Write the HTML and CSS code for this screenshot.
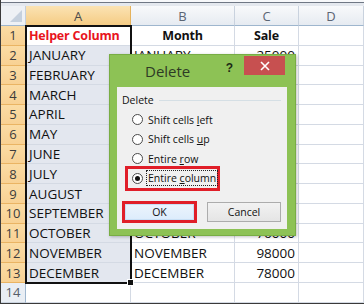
FILE: index.html
```html
<!DOCTYPE html>
<html lang="en">
<head>
  <meta charset="UTF-8">
  <title>Delete Column</title>
  <link rel="stylesheet" href="styles.css">
</head>
<body>
  <div class="screen">
    <div class="topbar"></div>
    <div class="sheet">
      <div class="corner"><span class="tri"></span></div>
      <div class="colhead active">A</div>
      <div class="colhead">B</div>
      <div class="colhead">C</div>
      <div class="colhead">D</div>

      <div class="rowhead active">1</div>
      <div class="cell sel first red bold">Helper Column</div>
      <div class="cell bold center">Month</div>
      <div class="cell bold center">Sale</div>
      <div class="cell"></div>

      <div class="rowhead active">2</div>
      <div class="cell sel">JANUARY</div>
      <div class="cell">JANUARY</div>
      <div class="cell num">25000</div>
      <div class="cell"></div>

      <div class="rowhead active">3</div>
      <div class="cell sel">FEBRUARY</div>
      <div class="cell">FEBRUARY</div>
      <div class="cell num">45000</div>
      <div class="cell"></div>

      <div class="rowhead active">4</div>
      <div class="cell sel">MARCH</div>
      <div class="cell">MARCH</div>
      <div class="cell num">36000</div>
      <div class="cell"></div>

      <div class="rowhead active">5</div>
      <div class="cell sel">APRIL</div>
      <div class="cell">APRIL</div>
      <div class="cell num">54000</div>
      <div class="cell"></div>

      <div class="rowhead active">6</div>
      <div class="cell sel">MAY</div>
      <div class="cell">MAY</div>
      <div class="cell num">62000</div>
      <div class="cell"></div>

      <div class="rowhead active">7</div>
      <div class="cell sel">JUNE</div>
      <div class="cell">JUNE</div>
      <div class="cell num">48000</div>
      <div class="cell"></div>

      <div class="rowhead active">8</div>
      <div class="cell sel">JULY</div>
      <div class="cell">JULY</div>
      <div class="cell num">57000</div>
      <div class="cell"></div>

      <div class="rowhead active">9</div>
      <div class="cell sel">AUGUST</div>
      <div class="cell">AUGUST</div>
      <div class="cell num">69000</div>
      <div class="cell"></div>

      <div class="rowhead active">10</div>
      <div class="cell sel">SEPTEMBER</div>
      <div class="cell">SEPTEMBER</div>
      <div class="cell num">84000</div>
      <div class="cell"></div>

      <div class="rowhead active">11</div>
      <div class="cell sel">OCTOBER</div>
      <div class="cell">OCTOBER</div>
      <div class="cell num">76000</div>
      <div class="cell"></div>

      <div class="rowhead active">12</div>
      <div class="cell sel">NOVEMBER</div>
      <div class="cell">NOVEMBER</div>
      <div class="cell num">98000</div>
      <div class="cell"></div>

      <div class="rowhead active">13</div>
      <div class="cell sel">DECEMBER</div>
      <div class="cell">DECEMBER</div>
      <div class="cell num">78000</div>
      <div class="cell"></div>

      <div class="rowhead">14</div>
      <div class="cell"></div>
      <div class="cell"></div>
      <div class="cell"></div>
      <div class="cell"></div>
    </div>

    <div class="selection"><span class="handle"></span></div>

    <div class="dialog">
      <div class="titlebar">
        <span class="title">Delete</span>
        <span class="help">?</span>
        <span class="close">
          <svg width="10" height="10" viewBox="0 0 10 10"><path d="M1 1L9 9M9 1L1 9" stroke="#fff" stroke-width="1.6"/></svg>
        </span>
      </div>
      <div class="panel">
        <div class="group-label">Delete</div>
        <div class="options">
          <div class="option"><span class="radio"></span><span class="label">Shift cells <u>l</u>eft</span></div>
          <div class="option"><span class="radio"></span><span class="label">Shift cells <u>u</u>p</span></div>
          <div class="option"><span class="radio"></span><span class="label">Entire <u>r</u>ow</span></div>
          <div class="option marked"><span class="radio checked"></span><span class="label focus">Entire <u>c</u>olumn</span></div>
        </div>
        <div class="buttons">
          <div class="btn ok">OK</div>
          <div class="btn cancel">Cancel</div>
        </div>
      </div>
    </div>
  </div>
</body>
</html>
```

FILE: styles.css
```css
body {
  margin: 0;
  background: #fff;
}

.screen {
  position: relative;
  width: 364px;
  height: 304px;
  overflow: hidden;
  box-sizing: border-box;
  border-left: 1px solid #3a3a3a;
  border-bottom: 1px solid #3a3a3a;
  font-family: 'Open Sans', sans-serif;
}

.topbar {
  height: 6px;
  box-sizing: border-box;
  background: #eef1f5;
  border-top: 2px solid #f7f8fa;
  border-bottom: 3px solid #e4e8ee;
  box-shadow: inset 0 1px 0 #6f7784;
}

.sheet {
  display: grid;
  grid-template-columns: 25px 105px 104px 64px 65px;
  grid-template-rows: 20px repeat(13, 19.77px) 20px;
}

.corner {
  position: relative;
  background: #eef1f5;
  border-right: 1px solid #c4cfdc;
  border-bottom: 1px solid #9eb6ce;
}

.corner .tri {
  position: absolute;
  right: 3px;
  bottom: 3px;
  width: 0;
  height: 0;
  border-left: 12px solid transparent;
  border-bottom: 12px solid #c5d0dd;
}

.colhead {
  display: flex;
  align-items: center;
  justify-content: center;
  background: linear-gradient(#f8f9fb, #e6ebf1);
  border-right: 1px solid #c9d2de;
  border-bottom: 1px solid #9eb6ce;
  color: #5b6574;
  font-size: 13px;
}

.colhead.active {
  background: linear-gradient(#fbe3b3, #f5cc85);
  border-right-color: #e5b25c;
  border-bottom-color: #e1a43e;
  color: #4b4b4b;
}

.rowhead {
  display: flex;
  align-items: center;
  justify-content: center;
  background: #e9eef4;
  border-right: 1px solid #9eb6ce;
  border-bottom: 1px solid #c9d2de;
  color: #555d69;
  font-size: 13px;
}

.rowhead.active {
  background: linear-gradient(#fbdca4, #f8d193);
  border-right-color: #e1a43e;
  border-bottom-color: #eab463;
  color: #3c3c3c;
}

.cell {
  display: flex;
  align-items: center;
  padding: 0 3px;
  min-width: 0;
  white-space: nowrap;
  overflow: hidden;
  border-right: 1px solid #d4dae4;
  border-bottom: 1px solid #d4dae4;
  font-size: 13.5px;
  color: #111;
}

.cell.sel {
  background: #e3e7ef;
}

.cell.first {
  background: #fff;
}

.cell.red {
  color: #e8141c;
}

.cell.bold {
  font-weight: 700;
  font-size: 12.5px;
  letter-spacing: -0.2px;
}

.cell.center {
  justify-content: center;
}

.cell.num {
  justify-content: flex-end;
}

.selection {
  position: absolute;
  left: 24px;
  top: 25px;
  width: 107px;
  height: 259px;
  border: 2px solid #111;
  box-sizing: border-box;
}

.selection .handle {
  position: absolute;
  right: -4px;
  bottom: -4px;
  width: 5px;
  height: 5px;
  background: #111;
  border: 1px solid #fff;
}

/* dialog */
.dialog {
  position: absolute;
  left: 108px;
  top: 54px;
  width: 187px;
  height: 182px;
  box-sizing: border-box;
  padding: 0 8px 6px 7px;
  background: #8dc255;
  border: 1px solid #78ad44;
  box-shadow: 1px 1px 3px rgba(0, 0, 0, 0.25);
  display: flex;
  flex-direction: column;
}

.titlebar {
  height: 32px;
  display: flex;
  align-items: flex-start;
}

.title {
  margin: 6px 0 0 28px;
  font-size: 15px;
  color: #2e3a25;
  line-height: 20px;
}

.help {
  margin: 6px 11px 0 auto;
  font-family: 'Liberation Sans', sans-serif;
  font-weight: 700;
  font-size: 12px;
  color: #1d2a16;
}

.close {
  margin: 1px 2px 0 0;
  width: 41px;
  height: 19px;
  background: #c75050;
  display: flex;
  align-items: center;
  justify-content: center;
}

.panel {
  flex: 1;
  background: #f0f0f0;
  padding-top: 6px;
  font-size: 10.5px;
  color: #111;
}

.group-label {
  display: flex;
  align-items: center;
  height: 14px;
  padding-left: 5px;
}

.group-label::after {
  content: "";
  flex: 1;
  margin: 1px 6px 0 5px;
  border-top: 1px solid #d5dfe5;
}

.options {
  margin-top: 3px;
  padding-left: 8px;
}

.option {
  display: flex;
  align-items: center;
  height: 19.5px;
  padding-left: 7px;
  white-space: nowrap;
}

.option.marked {
  box-sizing: border-box;
  width: 95px;
  height: 25.5px;
  margin: -3px 0;
  padding-left: 4px;
  border: 3px solid #e01e28;
}

.radio {
  flex: none;
  width: 11px;
  height: 11px;
  margin-right: 5px;
  border-radius: 50%;
  border: 1px solid #4a4a4a;
  background: #fff;
  box-sizing: border-box;
  display: flex;
  align-items: center;
  justify-content: center;
}

.radio.checked::after {
  content: "";
  width: 5px;
  height: 5px;
  border-radius: 50%;
  background: #111;
}

.label {
  line-height: 14px;
}

.focus {
  outline: 1px dotted #222;
  padding: 0 1px;
  margin-left: -1px;
}

.buttons {
  display: flex;
  align-items: center;
  gap: 10px;
  margin-top: 13px;
  padding-left: 5px;
}

.btn {
  box-sizing: border-box;
  display: flex;
  align-items: center;
  justify-content: center;
}

.ok {
  width: 75px;
  height: 22px;
  border: 3px solid #e01e28;
  background: linear-gradient(#ecf4fc, #dcecfc);
  box-shadow: inset 0 0 0 1px #c8dff5;
}

.cancel {
  width: 74px;
  height: 20px;
  border: 1px solid #acacac;
  background: linear-gradient(#f2f2f2, #e5e5e5);
}
```
